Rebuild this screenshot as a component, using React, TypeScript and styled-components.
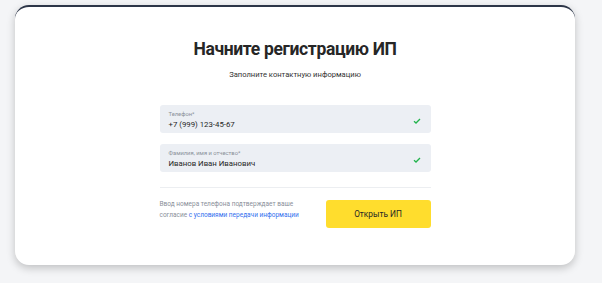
import * as React from "react";
import styled, { createGlobalStyle } from "styled-components";

const GlobalStyle = createGlobalStyle`
  html, body {
    margin: 0;
    background: #f4f5f7;
    font-family: Roboto, "Noto Sans", sans-serif;
  }
`;

const Page = styled.div`
  padding: 5px 27px 18px 15px;
`;

const Card = styled.div`
  background: #ffffff;
  border-top: 2px solid #2d3648;
  border-radius: 14px;
  box-shadow: 0 3px 8px rgba(0, 0, 0, 0.22);
  height: 260px;
  display: flex;
  flex-direction: column;
  align-items: center;
  padding-top: 31px;
  box-sizing: border-box;
`;

const Title = styled.h1`
  margin: 0;
  font-size: 17.5px;
  line-height: 22px;
  font-weight: 700;
  letter-spacing: -0.35px;
  color: #262626;
`;

const Subtitle = styled.p`
  margin: 10px 0 0;
  font-size: 7.6px;
  line-height: 10px;
  color: #333;
`;

const Form = styled.div`
  width: 271px;
  margin-top: 25px;
  display: flex;
  flex-direction: column;
  gap: 11px;
`;

const Field = styled.div`
  background: #eceff4;
  border-radius: 3px;
  height: 28px;
  padding: 3px 10px 0 9px;
  box-sizing: border-box;
  display: flex;
  align-items: center;
`;

const FieldText = styled.div`
  flex: 1;
  display: flex;
  flex-direction: column;
  gap: 2px;
`;

const FieldLabel = styled.span`
  font-size: 5.8px;
  line-height: 7px;
  color: #8a8f99;
`;

const FieldValue = styled.span`
  font-size: 7.8px;
  line-height: 10px;
  color: #262626;
`;

const Divider = styled.hr`
  width: 271px;
  margin: 15px 0 0;
  border: none;
  border-top: 1px solid #eceef1;
`;

const Footer = styled.div`
  width: 271px;
  margin-top: 12px;
  display: flex;
  align-items: flex-start;
  justify-content: space-between;
`;

const Consent = styled.div`
  margin-top: -1px;
  font-size: 6.5px;
  line-height: 11px;
  color: #8a8f99;
  width: 150px;
`;

const ConsentLine = styled.div`
  white-space: nowrap;
`;

const Link = styled.a`
  color: #336fee;
  text-decoration: none;
`;

const Button = styled.button`
  width: 105px;
  height: 28px;
  border: none;
  border-radius: 3px;
  background: #ffdd2d;
  color: #262626;
  font-family: inherit;
  font-size: 8.3px;
`;

const Check = () => (
  <svg width="8" height="8" viewBox="0 0 8 8">
    <path d="M1 4.2 L3 6 L7 2" fill="none" stroke="#22b34c" strokeWidth="1.3" />
  </svg>
);

export default function App() {
  return (
    <>
      <GlobalStyle />
      <Page>
        <Card>
          <Title>Начните регистрацию ИП</Title>
          <Subtitle>Заполните контактную информацию</Subtitle>
          <Form>
            <Field>
              <FieldText>
                <FieldLabel>Телефон*</FieldLabel>
                <FieldValue>+7 (999) 123-45-67</FieldValue>
              </FieldText>
              <Check />
            </Field>
            <Field>
              <FieldText>
                <FieldLabel>Фамилия, имя и отчество*</FieldLabel>
                <FieldValue>Иванов Иван Иванович</FieldValue>
              </FieldText>
              <Check />
            </Field>
          </Form>
          <Divider />
          <Footer>
            <Consent>
              <ConsentLine>Ввод номера телефона подтверждает ваше</ConsentLine>
              <ConsentLine>
                согласие <Link href="#">с условиями передачи информации</Link>
              </ConsentLine>
            </Consent>
            <Button>Открыть ИП</Button>
          </Footer>
        </Card>
      </Page>
    </>
  );
}
